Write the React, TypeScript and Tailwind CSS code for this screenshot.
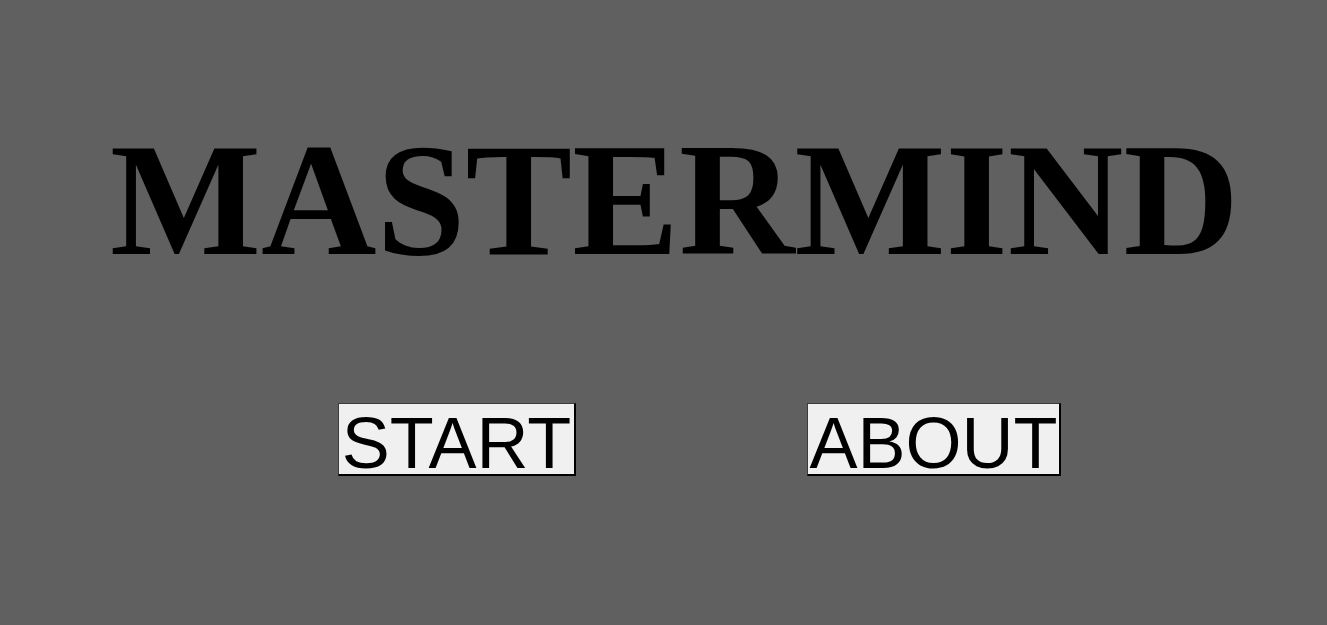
export default function App() {
  return (
    <div className="min-h-[625px] w-full bg-[#606060] flex flex-col">
      <h1 className="mt-[120px] pl-[22px] text-center text-[160px] leading-none font-bold text-black [font-family:'Liberation_Serif',serif]">
        MASTERMIND
      </h1>
      <div className="mt-[123px] flex items-start pl-[338px] gap-[231px]">
        <button className="w-[238px] h-[73px] pt-[9px] bg-[#f0f0f0] border-t border-l border-r-2 border-b-2 border-t-[#3c3c3c] border-l-[#3c3c3c] border-r-black border-b-black text-[72px] leading-[61px] text-black [font-family:'Liberation_Sans',sans-serif]">
          START
        </button>
        <button className="w-[254px] h-[73px] pt-[9px] bg-[#f0f0f0] border-t border-l border-r-2 border-b-2 border-t-[#3c3c3c] border-l-[#3c3c3c] border-r-black border-b-black text-[72px] leading-[61px] text-black [font-family:'Liberation_Sans',sans-serif]">
          ABOUT
        </button>
      </div>
    </div>
  )
}
